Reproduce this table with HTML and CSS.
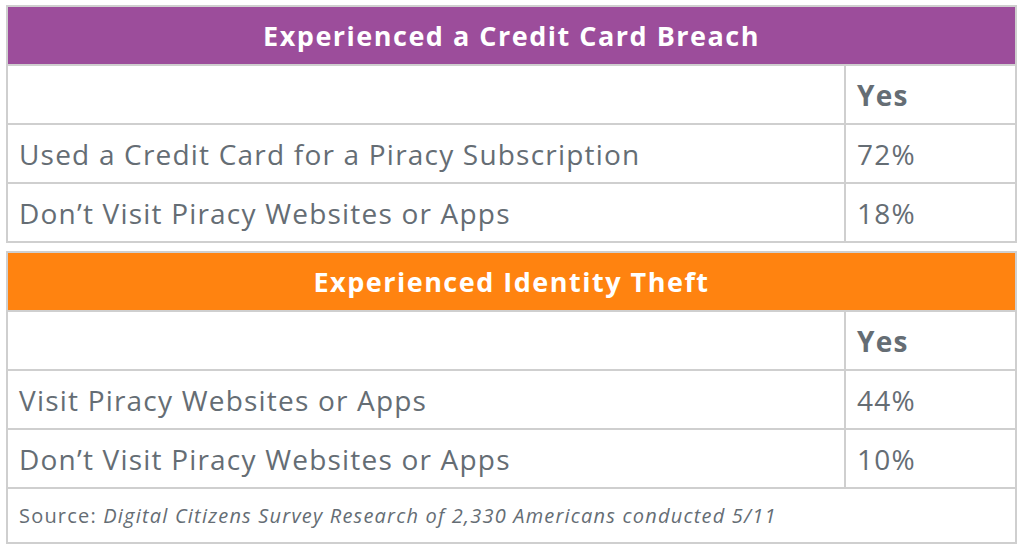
FILE: index.html
```html
<!DOCTYPE html>
<html lang="en">
<head>
    <meta charset="UTF-8">
    <title>Piracy Survey</title>
    <link rel="stylesheet" href="styles.css">
</head>
<body>
    <table class="survey">
        <colgroup>
            <col>
            <col class="val-col">
        </colgroup>
        <tr>
            <th colspan="2" class="title purple">Experienced a Credit Card Breach</th>
        </tr>
        <tr>
            <td></td>
            <td class="head">Yes</td>
        </tr>
        <tr>
            <td>Used a Credit Card for a Piracy Subscription</td>
            <td>72%</td>
        </tr>
        <tr>
            <td>Don’t Visit Piracy Websites or Apps</td>
            <td>18%</td>
        </tr>
    </table>

    <table class="survey second">
        <colgroup>
            <col>
            <col class="val-col">
        </colgroup>
        <tr>
            <th colspan="2" class="title orange">Experienced Identity Theft</th>
        </tr>
        <tr>
            <td></td>
            <td class="head">Yes</td>
        </tr>
        <tr>
            <td>Visit Piracy Websites or Apps</td>
            <td>44%</td>
        </tr>
        <tr>
            <td>Don’t Visit Piracy Websites or Apps</td>
            <td>10%</td>
        </tr>
        <tr>
            <td colspan="2" class="source">Source: <em>Digital Citizens Survey Research of 2,330 Americans conducted 5/11</em></td>
        </tr>
    </table>
</body>
</html>
```

FILE: styles.css
```css
body {
    margin: 5px 0 0 6px;
    background-color: #fff;
    font-family: "Open Sans", Lato, sans-serif;
    color: #656d74;
}
.survey {
    width: 1011px;
    border-collapse: collapse;
    table-layout: fixed;
}
.val-col {
    width: 171px;
}
.second {
    margin-top: 8px;
}
.survey td, .survey th {
    border: 2px solid #cfcfcf;
    height: 57px;
    padding: 0 11px;
    font-size: 28px;
    letter-spacing: 1.2px;
    text-align: left;
    white-space: nowrap;
}
.survey td.head {
    font-weight: bold;
}
.survey th.title {
    color: #fff;
    text-align: center;
    font-weight: bold;
    font-size: 27px;
    letter-spacing: 1.5px;
}
.purple {
    background-color: #9c4d9b;
}
.orange {
    background-color: #ff8310;
}
.survey td.source {
    font-size: 20px;
    letter-spacing: 1.2px;
    height: 53px;
}
```
